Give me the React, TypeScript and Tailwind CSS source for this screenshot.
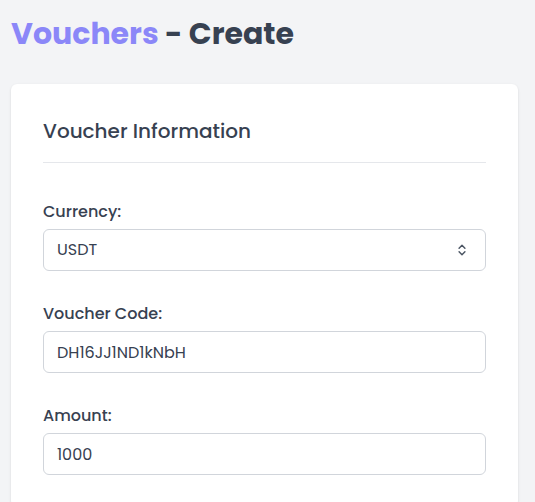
import { ChevronsUpDown } from "lucide-react"

const FONT = "font-['Poppins','Noto_Sans','Open_Sans',sans-serif]"

function Field({ label, children }: { label: string; children: React.ReactNode }) {
  return (
    <div className="flex flex-col gap-[5px]">
      <label className="text-[16px] font-medium leading-[24px] text-[#374151]">{label}</label>
      {children}
    </div>
  )
}

export default function App() {
  return (
    <div className={`min-h-[502px] bg-[#f3f4f6] pl-[11px] pr-[17px] pt-[16px] ${FONT}`}>
      <h1 className="text-[30px] font-bold leading-[36px] text-[#374151]">
        <span className="text-[#8b87f8]">Vouchers</span> - Create
      </h1>

      <div className="mt-[32px] rounded-md bg-white px-[32px] pt-[33px] pb-8 shadow-sm">
        <h2 className="border-b border-[#e5e7eb] pb-[17px] text-[20px] font-medium leading-[28px] text-[#374151]">
          Voucher Information
        </h2>

        <div className="mt-[37px] flex flex-col gap-[31px]">
          <Field label="Currency:">
            <div className="flex h-[42px] items-center justify-between rounded-md border border-[#d1d5db] bg-white pl-[13px] pr-[16px] text-[16px] text-[#374151]">
              <span>USDT</span>
              <ChevronsUpDown className="h-[14px] w-[14px] text-[#4b5563]" strokeWidth={2.5} />
            </div>
          </Field>

          <Field label="Voucher Code:">
            <input
              readOnly
              value="DH16JJ1ND1kNbH"
              className="h-[42px] rounded-md border border-[#d1d5db] bg-white px-[13px] text-[16px] text-[#374151] outline-none"
            />
          </Field>

          <Field label="Amount:">
            <input
              readOnly
              value="1000"
              className="h-[42px] rounded-md border border-[#d1d5db] bg-white px-[13px] text-[16px] text-[#374151] outline-none"
            />
          </Field>
        </div>
      </div>
    </div>
  )
}
